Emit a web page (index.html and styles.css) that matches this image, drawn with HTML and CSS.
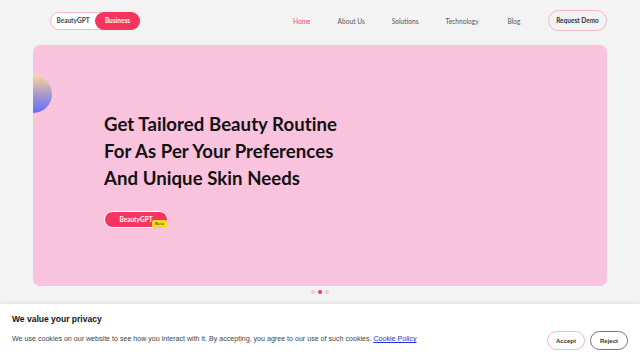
FILE: index.html
```html
<!DOCTYPE html>
<html>
<head>
<meta charset="utf-8">
<link rel="stylesheet" href="styles.css">
</head>
<body>
<header class="nav">
  <div class="toggle">
    <span class="tog-a">BeautyGPT</span>
    <span class="tog-b">Business</span>
  </div>
  <nav class="links">
    <a class="link active">Home</a>
    <a class="link">About Us</a>
    <a class="link">Solutions</a>
    <a class="link">Technology</a>
    <a class="link">Blog</a>
  </nav>
  <a class="demo">Request Demo</a>
</header>
<main class="main">
  <section class="hero">
    <div class="orb"></div>
    <h1 class="title">Get Tailored Beauty Routine<br>For As Per Your Preferences<br>And Unique Skin Needs</h1>
    <div class="cta-wrap">
      <a class="cta">BeautyGPT</a>
      <span class="beta">Beta</span>
    </div>
  </section>
  <div class="dots"><span class="dot"></span><span class="dot on"></span><span class="dot"></span></div>
</main>
<div class="cookie">
  <div class="cookie-text">
    <h2 class="cookie-title">We value your privacy</h2>
    <p class="cookie-body">We use cookies on our website to see how you interact with it. By accepting, you agree to our use of such cookies. <a class="policy">Cookie Policy</a></p>
  </div>
  <div class="cookie-btns">
    <a class="btn accept">Accept</a>
    <a class="btn reject">Reject</a>
  </div>
</div>
</body>
</html>
```
FILE: styles.css
```css
* { box-sizing: border-box; }
html, body { margin: 0; padding: 0; }
body {
  width: 640px; height: 360px; overflow: hidden;
  background: #f3f3f3;
  font-family: "Lato", "Noto Sans", sans-serif;
  position: relative;
}
.nav {
  display: flex; align-items: center;
  height: 41px; padding: 0 33px 0 50px;
}
.toggle {
  display: flex; align-items: center;
  height: 18px; border: 1px solid #f8b9c6; border-radius: 9px;
  background: #fff; font-size: 6.5px; font-weight: 700; white-space: nowrap;
}
.tog-a { width: 44px; text-align: center; color: #444; }
.tog-b {
  background: #f6345f; color: #fff; height: 18px; margin: -1px -1px -1px 0; width: 45px;
  display: flex; align-items: center; justify-content: center; border-radius: 9px;
}
.links { display: flex; margin-left: 153px; gap: 27px; white-space: nowrap; }
.link { font-size: 6.6px; color: #555; }
.link:nth-child(4) { margin-right: 2px; }
.link.active { color: #f2466e; }
.demo {
  margin-left: auto; height: 21px; width: 59px; white-space: nowrap;
  border: 1px solid #f6b6c6; border-radius: 11px;
  display: flex; align-items: center; justify-content: center;
  font-size: 6.5px; font-weight: 700; color: #333;
}
.main { padding: 4px 33px 0 33px; }
.hero {
  position: relative; height: 241px; background: #f9c3de; border-radius: 7px;
  overflow: hidden; padding: 66px 0 0 71px;
}
.orb {
  position: absolute; left: -19px; top: 30px; width: 38px; height: 38px; border-radius: 50%;
  background: linear-gradient(180deg, #fbd79c 0%, #a89acb 50%, #5f6cff 100%);
}
.title {
  margin: 0; font-size: 18.6px; line-height: 27px; font-weight: 700; color: #111;
  letter-spacing: 0.05px;
}
.cta-wrap { position: relative; display: inline-block; margin-top: 19px; }
.cta {
  display: flex; align-items: center; justify-content: center;
  width: 64px; height: 17px; background: #f6345f; border: 1.5px solid #fff; border-radius: 9px;
  color: #fff; font-size: 6.5px; font-weight: 700;
}
.beta {
  position: absolute; left: 48px; top: 9px; background: #f5dc1c; color: #333;
  font-size: 4.5px; padding: 1px 3px; border-radius: 2px; line-height: 6px;
}
.dots { display: flex; justify-content: center; gap: 3px; margin-top: 4px; }
.dot { width: 4px; height: 4px; border-radius: 50%; background: #f8c6d5; }
.dot.on { background: #f6345f; }
.cookie {
  position: absolute; left: 0; right: 0; bottom: 0; height: 56px;
  background: #fff; box-shadow: 0 -1px 4px rgba(0,0,0,0.08);
  display: flex; align-items: flex-start; padding: 10px 12px 0 12px;
  font-family: "Liberation Sans", Arial, sans-serif;
}
.cookie-text { flex: 1; }
.cookie-title { margin: 0 0 10px; font-size: 8.5px; line-height: 11px; font-weight: 700; color: #111; }
.cookie-body { margin: 0; font-size: 7.1px; line-height: 9px; color: #444; white-space: nowrap; }
.policy { color: #2233dd; text-decoration: underline; }
.cookie-btns { display: flex; gap: 5px; margin-top: 17px; }
.btn {
  width: 38px; height: 19px; border-radius: 10px; display: flex; align-items: center;
  justify-content: center; font-size: 6px; font-weight: 700; color: #333; background: #fff;
}
.accept { border: 1px solid #f6b6c6; }
.reject { border: 1px solid #777; }
```
